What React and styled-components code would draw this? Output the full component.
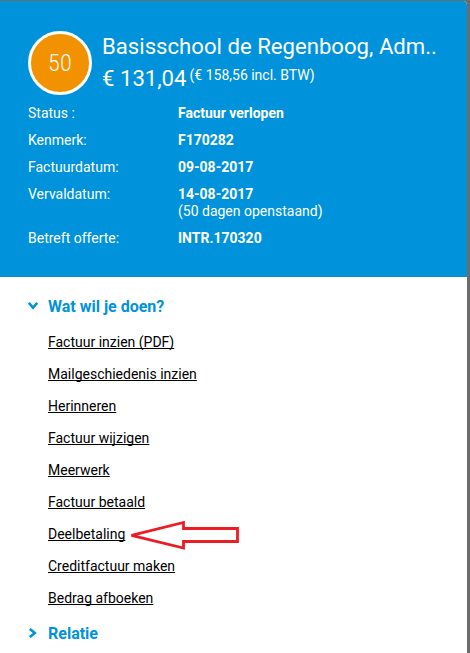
import React, { useState } from 'react';
import styled, { createGlobalStyle, ThemeProvider } from 'styled-components';

const theme = {
  primary: '#0092db',
  link: '#000000',
  badge: '#f39200',
  arrow: '#ed1c24',
  backdrop: '#6c6c6c'
};

const invoice = {
  days: 50,
  customer: 'Basisschool de Regenboog, Adm..',
  amount: '€ 131,04',
  amountIncl: '(€ 158,56 incl. BTW)',
  details: [
    { label: 'Status :', value: 'Factuur verlopen' },
    { label: 'Kenmerk:', value: 'F170282' },
    { label: 'Factuurdatum:', value: '09-08-2017' },
    { label: 'Vervaldatum:', value: '14-08-2017', note: '(50 dagen openstaand)' },
    { label: 'Betreft offerte:', value: 'INTR.170320' }
  ]
};

const actions = [
  { label: 'Factuur inzien (PDF)' },
  { label: 'Mailgeschiedenis inzien' },
  { label: 'Herinneren' },
  { label: 'Factuur wijzigen' },
  { label: 'Meerwerk' },
  { label: 'Factuur betaald' },
  { label: 'Deelbetaling', marked: true },
  { label: 'Creditfactuur maken' },
  { label: 'Bedrag afboeken' }
];

const GlobalStyle = createGlobalStyle`
  * {
    box-sizing: border-box;
  }

  body {
    margin: 0;
    overflow: hidden;
    font-family: Roboto, 'Liberation Sans', sans-serif;
    font-size: 14px;
    line-height: 17px;
  }
`;

const Backdrop = styled.div`
  height: 100vh;
  padding: 1px 3px 0 0;
  background: ${props => props.theme.backdrop};
`;

const Card = styled.div`
  height: 100%;
  overflow: hidden;
  border-radius: 0 4px 0 0;
  background: #ffffff;
`;

const Header = styled.header`
  height: 276px;
  padding: 30px 28px 0;
  background: ${props => props.theme.primary};
  color: #ffffff;
`;

const Summary = styled.div`
  display: flex;
  gap: 10px;
  height: 74px;
`;

const DaysBadge = styled.div`
  flex: none;
  display: flex;
  align-items: center;
  justify-content: center;
  width: 64px;
  height: 64px;
  border: 3px solid #ffffff;
  border-radius: 50%;
  background: ${props => props.theme.badge};
`;

const Days = styled.span`
  font-size: 24px;
  font-weight: 300;
  line-height: 30px;
  letter-spacing: 1px;
  margin-right: -1px;
  transform: scaleX(0.85);
`;

const Customer = styled.h1`
  margin: -1px 0 0;
  font-size: 22.15px;
  font-weight: 400;
  line-height: 32px;
  white-space: nowrap;
`;

const Amount = styled.div`
  display: flex;
  gap: 3px;
  font-size: 22.15px;
  line-height: 32px;
  white-space: nowrap;
`;

const AmountIncl = styled.span`
  font-size: 14px;
  line-height: 27px;
`;

const Details = styled.dl`
  display: grid;
  grid-template-columns: 150px 1fr;
  row-gap: 10px;
  margin: 0;
`;

const Label = styled.dt`
  margin: 0;
`;

const Value = styled.dd`
  margin: 0;
  font-weight: 700;
`;

const Note = styled.div`
  font-weight: 400;
`;

const Menu = styled.div`
  padding: 20px 28px 0;
`;

const SectionTitle = styled.button`
  display: flex;
  align-items: center;
  width: 100%;
  height: 20px;
  padding: 0;
  border: none;
  background: none;
  color: ${props => props.theme.primary};
  font: 700 16px/20px Roboto, 'Liberation Sans', sans-serif;
  cursor: pointer;
`;

const Chevron = styled.svg`
  width: 10px;
  height: 10px;
  margin-right: 10px;
  transform: translateY(-1px) rotate(${props => (props.$open ? 90 : 0)}deg);
`;

const ActionList = styled.ul`
  margin: 9px 0 10px 20px;
  padding: 0;
  list-style: none;
`;

const ActionItem = styled.li`
  display: flex;
  align-items: center;
  height: 32px;
`;

const ActionLink = styled.a`
  color: ${props => props.theme.link};
  text-decoration: underline;
  text-decoration-skip-ink: none;
  text-decoration-thickness: 1px;
  text-underline-offset: 1px;
`;

const Arrow = styled.svg`
  width: 110px;
  height: 32px;
  margin-left: 4px;
`;

function Section({ title, defaultOpen = false, children }) {
  const [open, setOpen] = useState(defaultOpen);

  return (
    <>
      <SectionTitle onClick={() => setOpen(!open)}>
        <Chevron $open={open} viewBox="0 0 10 10">
          <path d="M1.8 0.9 L6.8 5 L1.8 9.1" fill="none" stroke="currentColor" strokeWidth="2.6" />
        </Chevron>
        {title}
      </SectionTitle>
      {open && children}
    </>
  );
}

function App() {
  return (
    <ThemeProvider theme={theme}>
      <GlobalStyle />
      <Backdrop>
        <Card>
          <Header>
            <Summary>
              <DaysBadge>
                <Days>{invoice.days}</Days>
              </DaysBadge>
              <div>
                <Customer>{invoice.customer}</Customer>
                <Amount>
                  {invoice.amount}
                  <AmountIncl>{invoice.amountIncl}</AmountIncl>
                </Amount>
              </div>
            </Summary>
            <Details>
              {invoice.details.map(({ label, value, note }) => (
                <React.Fragment key={label}>
                  <Label>{label}</Label>
                  <Value>
                    {value}
                    {note && <Note>{note}</Note>}
                  </Value>
                </React.Fragment>
              ))}
            </Details>
          </Header>
          <Menu>
            <Section title="Wat wil je doen?" defaultOpen>
              <ActionList>
                {actions.map(({ label, marked }) => (
                  <ActionItem key={label}>
                    <ActionLink href="#">{label}</ActionLink>
                    {marked && (
                      <Arrow viewBox="0 0 110 32">
                        <path
                          d="M2.5 17.3 L54.5 4.5 V10.5 H108.5 V23.5 H54.5 V30 Z"
                          fill="none"
                          stroke={theme.arrow}
                          strokeWidth="2.8"
                        />
                      </Arrow>
                    )}
                  </ActionItem>
                ))}
              </ActionList>
            </Section>
            <Section title="Relatie" />
          </Menu>
        </Card>
      </Backdrop>
    </ThemeProvider>
  );
}

export default App;
